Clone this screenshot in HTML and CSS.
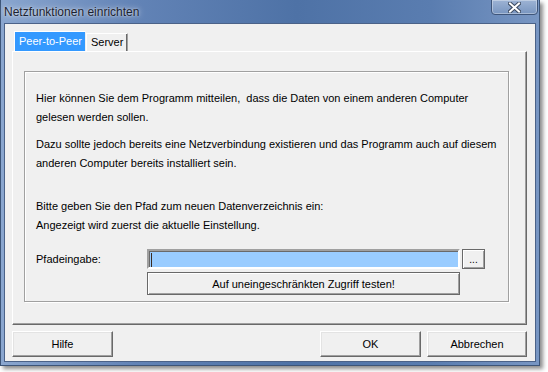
FILE: index.html
```html
<!DOCTYPE html>
<html lang="de">
<head>
    <meta charset="UTF-8">
    <title>Netzfunktionen einrichten</title>
    <link rel="stylesheet" href="styles.css">
</head>
<body>
    <div class="window">
        <div class="titlebar">
            <span class="title">Netzfunktionen einrichten</span>
            <button class="close-btn" aria-label="Schließen">
                <svg width="13" height="11" viewBox="0 0 13 11">
                    <path d="M2 1.5 L11 9.5 M11 1.5 L2 9.5" stroke="#3c4a60" stroke-width="4" stroke-linecap="square"/>
                    <path d="M2 1.5 L11 9.5 M11 1.5 L2 9.5" stroke="#ffffff" stroke-width="2" stroke-linecap="square"/>
                </svg>
            </button>
        </div>

        <div class="client">
            <div class="tabs">
                <div class="tab active">Peer-to-Peer</div>
                <div class="tab">Server</div>
            </div>

            <div class="tab-pane">
                <div class="group">
                    <p class="para">Hier können Sie dem Programm mitteilen,&nbsp; dass die Daten von einem anderen Computer<br>gelesen werden sollen.</p>
                    <p class="para">Dazu sollte jedoch bereits eine Netzverbindung existieren und das Programm auch auf diesem<br>anderen Computer bereits installiert sein.</p>
                    <p class="para para-gap">Bitte geben Sie den Pfad zum neuen Datenverzeichnis ein:<br>Angezeigt wird zuerst die aktuelle Einstellung.</p>

                    <div class="path-row">
                        <label class="path-label" for="path">Pfadeingabe:</label>
                        <div class="path-fields">
                            <div class="path-input-row">
                                <div class="path-input" id="path"><span class="caret"></span></div>
                                <button class="btn browse-btn">...</button>
                            </div>
                            <button class="btn test-btn">Auf uneingeschränkten Zugriff testen!</button>
                        </div>
                    </div>
                </div>
            </div>

            <div class="footer">
                <button class="btn dlg-btn">Hilfe</button>
                <div class="footer-right">
                    <button class="btn dlg-btn">OK</button>
                    <button class="btn dlg-btn abort-btn">Abbrechen</button>
                </div>
            </div>
        </div>
    </div>
</body>
</html>
```

FILE: styles.css
```css
body {
    margin: 0;
    width: 548px;
    height: 372px;
    background-color: #ffffff;
    font-family: "Liberation Sans", Arial, sans-serif;
    font-size: 11px;
    color: #000;
    overflow: hidden;
    white-space: nowrap;
}

.window {
    width: 540px;
    height: 366px;
    display: flex;
    flex-direction: column;
    background: linear-gradient(90deg, #8aa6cf 0%, #6283b6 25%, #4e72a6 55%, #5a7db0 80%, #7896c3 100%);
    box-shadow: 3px 3px 4px rgba(0, 0, 0, 0.45);
    padding: 0 3px 3px 3px;
    box-sizing: border-box;
    border: 1px solid #3d5578;
    border-top: none;
}

.titlebar {
    height: 23px;
    display: flex;
    align-items: flex-start;
    justify-content: space-between;
    flex-shrink: 0;
}

.title {
    margin-top: 5px;
    color: #1b2230;
    font-size: 12px;
    text-shadow: 0 0 6px rgba(255, 255, 255, 0.8), 0 0 2px rgba(255, 255, 255, 0.6);
}

.close-btn {
    width: 47px;
    height: 16px;
    margin-top: -1px;
    margin-right: -2px;
    padding: 0;
    border: 1px solid #3e557a;
    border-radius: 0 0 4px 4px;
    background: linear-gradient(180deg, #9db3d4 0%, #7895c0 100%);
    box-shadow: inset 0 0 0 1px rgba(255, 255, 255, 0.35);
    display: flex;
    align-items: center;
    justify-content: center;
}

.client {
    flex: 1;
    min-height: 0;
    background-color: #f0f0f0;
    border: 1px solid #4b6288;
    padding: 8px 8px 4px 7px;
    display: flex;
    flex-direction: column;
}

.tabs {
    display: flex;
    align-items: flex-end;
    height: 19px;
    padding-left: 2px;
    flex-shrink: 0;
}

.tab {
    height: 17px;
    line-height: 16px;
    padding: 0 4px;
    border: 1px solid #a0a0a0;
    border-bottom: none;
    border-left-color: #ffffff;
    border-top-color: #ffffff;
    box-shadow: inset -1px 0 #696969;
    background-color: #f0f0f0;
}

.tab.active {
    height: 19px;
    line-height: 18px;
    width: 62px;
    text-align: center;
    background-color: #3399ff;
    color: #ffffff;
    border-color: #ffffff;
    border-right-color: #f0f0f0;
    box-shadow: none;
}

.tab-pane {
    height: 274px;
    flex-shrink: 0;
    box-sizing: border-box;
    border: 1px solid;
    border-color: #ffffff #696969 #696969 #ffffff;
    box-shadow: inset -1px -1px #a0a0a0;
    padding: 19px 20px 22px 11px;
    display: flex;
}

.group {
    flex: 1;
    border: 1px solid #a0a0a0;
    box-shadow: inset 1px 1px #ffffff, 1px 1px #ffffff;
    padding: 17px 12px 6px 11px;
}

.para {
    margin: 0 0 8px 0;
    line-height: 19px;
}

.para-gap {
    margin-top: 24px;
    margin-bottom: 14px;
}

.path-row {
    display: flex;
    align-items: flex-start;
}

.path-label {
    width: 111px;
    line-height: 20px;
}

.path-fields {
    display: flex;
    flex-direction: column;
    gap: 3px;
}

.path-input-row {
    display: flex;
    gap: 2px;
}

.path-input {
    width: 309px;
    height: 16px;
    background-color: #99ccff;
    border: 2px solid;
    border-color: #a0a0a0 #ffffff #ffffff #a0a0a0;
    box-shadow: inset 1px 1px #696969;
    position: relative;
}

.caret {
    position: absolute;
    left: 2px;
    top: 2px;
    width: 1px;
    height: 14px;
    background-color: #3a2a20;
}

.btn {
    font-family: "Liberation Sans", Arial, sans-serif;
    font-size: 11px;
    color: #000;
    background-color: #f0f0f0;
    padding: 0;
    border: 1px solid;
    border-color: #ffffff #696969 #696969 #ffffff;
    box-shadow: inset -1px -1px #a0a0a0, inset 1px 1px #e3e3e3;
}

.browse-btn {
    width: 23px;
    height: 20px;
    border-color: #696969;
    box-shadow: inset 1px 1px #ffffff, inset -1px -1px #a0a0a0;
    font-size: 10px;
}

.test-btn {
    width: 313px;
    height: 23px;
    border-color: #696969;
    box-shadow: inset 1px 1px #ffffff, inset -1px -1px #a0a0a0;
}

.footer {
    display: flex;
    justify-content: space-between;
    margin-top: 6px;
}

.footer-right {
    display: flex;
    gap: 6px;
}

.dlg-btn {
    width: 101px;
    height: 26px;
}

.abort-btn {
    width: 100px;
}
```
